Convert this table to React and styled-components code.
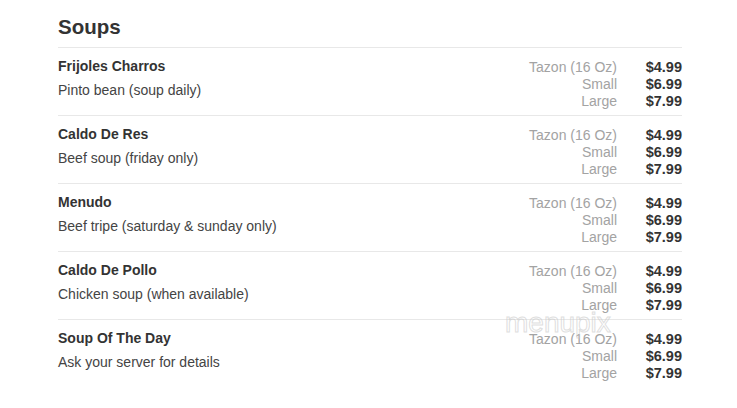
import React from 'react'
import styled, { createGlobalStyle } from 'styled-components'

const soups = [
    { name: 'Frijoles Charros', desc: 'Pinto bean (soup daily)' },
    { name: 'Caldo De Res', desc: 'Beef soup (friday only)' },
    { name: 'Menudo', desc: 'Beef tripe (saturday & sunday only)' },
    { name: 'Caldo De Pollo', desc: 'Chicken soup (when available)' },
    { name: 'Soup Of The Day', desc: 'Ask your server for details' },
]

const sizes = [
    { label: 'Tazon (16 Oz)', price: '$4.99' },
    { label: 'Small', price: '$6.99' },
    { label: 'Large', price: '$7.99' },
]

function App() {
    return (
        <>
            <Global />
            <Page>
                <Title>Soups</Title>
                <List>
                    {soups.map(s => (
                        <Item key={s.name}>
                            <Info>
                                <Name>{s.name}</Name>
                                <Desc>{s.desc}</Desc>
                            </Info>
                            <Prices>
                                {sizes.map(p => (
                                    <React.Fragment key={p.label}>
                                        <Label>{p.label}</Label>
                                        <Price>{p.price}</Price>
                                    </React.Fragment>
                                ))}
                            </Prices>
                        </Item>
                    ))}
                </List>
                <Watermark>menupix</Watermark>
            </Page>
        </>
    )
}

export default App

const Global = createGlobalStyle`
    body {
        margin: 0;
        background: #fff;
        font-family: "Liberation Sans", Arial, sans-serif;
    }
`

const Page = styled.div`
    position: relative;
    width: 624px;
    padding: 16px 0 0 58px;
`

const Title = styled.h2`
    margin: 0;
    height: 31px;
    font-size: 20.5px;
    font-weight: 700;
    color: #333;
    line-height: 22px;
`

const List = styled.div`
    display: flex;
    flex-direction: column;
`

const Item = styled.div`
    display: flex;
    justify-content: space-between;
    border-top: 1px solid #e8e8e8;
    padding: 10px 0 6px;
    height: 51px;
`

const Info = styled.div`
    display: flex;
    flex-direction: column;
    gap: 8px;
`

const Name = styled.div`
    font-size: 14px;
    font-weight: 700;
    color: #333;
    line-height: 16px;
`

const Desc = styled.div`
    font-size: 14px;
    color: #444;
    line-height: 16px;
`

const Prices = styled.div`
    display: grid;
    grid-template-columns: auto 37px;
    column-gap: 28px;
    grid-auto-rows: 17px;
    align-items: center;
`

const Label = styled.div`
    text-align: right;
    font-size: 14px;
    color: #a3a3a3;
`

const Price = styled.div`
    text-align: right;
    font-size: 14.5px;
    font-weight: 700;
    color: #333;
`

const Watermark = styled.div`
    position: absolute;
    left: 505px;
    top: 314px;
    font-size: 28px;
    line-height: 18px;
    color: transparent;
    -webkit-text-stroke: 1px rgba(200, 200, 200, 0.6);
    pointer-events: none;
`
